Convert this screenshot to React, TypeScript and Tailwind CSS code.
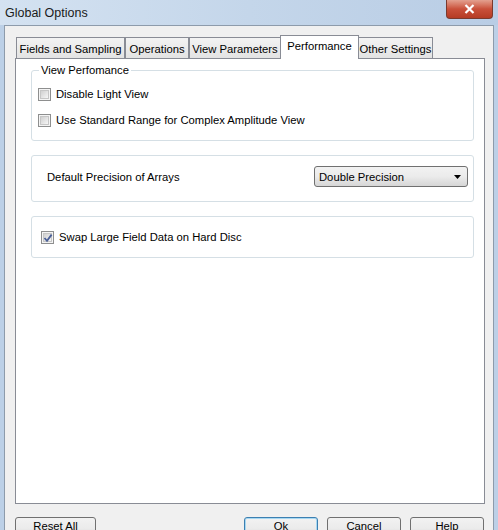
import React from "react";

const FONT = { fontFamily: '"Liberation Sans", Arial, sans-serif' };

const TABS = [
  { label: "Fields and Sampling", w: "w-[109px]" },
  { label: "Operations", w: "w-[64px]" },
  { label: "View Parameters", w: "w-[92px]" },
  { label: "Performance", w: "w-[79px]", active: true },
  { label: "Other Settings", w: "w-[75px]" },
];

function CheckBox({ checked = false }: { checked?: boolean }) {
  return (
    <span className="relative inline-flex h-[13px] w-[13px] shrink-0 items-center justify-center border border-[#8e8f8f] bg-[#f4f4f4]">
      <span className="h-[9px] w-[9px] border border-[#c6c6c6] bg-gradient-to-br from-[#d0d0d0] to-[#f6f6f6]" />
      {checked && (
        <svg className="absolute left-[1px] top-[1px]" width="10" height="10" viewBox="0 0 10 10">
          <path d="M1.5 5 L4 7.8 L8.6 1.6" fill="none" stroke="#4a5f97" strokeWidth="1.8" />
        </svg>
      )}
    </span>
  );
}

function Button({ label, primary = false, w }: { label: string; primary?: boolean; w: string }) {
  return (
    <div
      className={`flex h-[23px] ${w} items-start justify-center rounded-[3px] border bg-gradient-to-b from-[#f2f2f2] via-[#ebebeb] to-[#cfcfcf] pt-[1px] text-[11.25px] leading-[14px] text-black ${
        primary ? "border-[#3c7fb1] shadow-[inset_0_0_0_1px_#a7d8f2]" : "border-[#707070]"
      }`}
    >
      {label}
    </div>
  );
}

export default function App() {
  return (
    <div className="flex h-[530px] w-[498px] flex-col overflow-hidden bg-[#bcd0e7] text-black" style={FONT}>
      {/* Title bar */}
      <div className="flex h-[25px] shrink-0 items-start justify-between bg-gradient-to-r from-[#d4e2f1] via-[#c4d6ea] to-[#b9cde5] pl-[5px] pr-[5px]">
        <span className="mt-[4px] text-[12.5px] text-[#1a1a1a]">Global Options</span>
        <div className="flex h-[19px] w-[47px] items-center justify-center rounded-b-[4px] border border-t-0 border-[#7a3a2e] bg-gradient-to-b from-[#e3a08f] via-[#c9503a] to-[#b53b24]">
          <svg width="11" height="10" viewBox="0 0 11 10">
            <path d="M1.5 1 L9.5 9 M9.5 1 L1.5 9" stroke="#ffffff" strokeWidth="2.2" />
          </svg>
        </div>
      </div>

      {/* Client area */}
      <div className="mx-[4px] flex flex-1 flex-col border-l border-r border-t border-[#8d9bab] bg-[#f0f0f0] pl-[10px] pr-[8px] pt-[9px]">
        {/* Tabs */}
        <div className="flex h-[23px] items-end pl-[1px]">
          {TABS.map((t) =>
            t.active ? (
              <div
                key={t.label}
                className={`relative z-10 -mb-px -mx-[1px] flex h-[24px] ${t.w} justify-center whitespace-nowrap border border-b-0 border-[#898c95] bg-white pt-[3px] text-[11.25px] leading-[14px]`}
              >
                {t.label}
              </div>
            ) : (
              <div
                key={t.label}
                className={`flex h-[21px] ${t.w} justify-center whitespace-nowrap border border-b-0 border-[#898c95] bg-gradient-to-b from-[#f3f3f3] to-[#e3e3e3] pt-[4px] text-[11.25px] leading-[14px]`}
              >
                {t.label}
              </div>
            )
          )}
        </div>

        {/* Tab panel */}
        <div className="flex h-[446px] flex-col border border-[#898c95] bg-white pl-[15px] pr-[10px] pt-[4px]">
          <fieldset className="h-[78px] rounded-[3px] border border-[#d5dfe5] pl-[6px]">
            <legend className="ml-[1px] px-[2px] text-[11.25px] leading-[14px]">View Perfomance</legend>
            <label className="mt-[10px] flex h-[14px] items-center gap-[5px] text-[11.25px] leading-[14px]">
              <CheckBox />
              <span>Disable Light View</span>
            </label>
            <label className="mt-[12px] flex h-[14px] items-center gap-[5px] text-[11.25px] leading-[14px]">
              <CheckBox />
              <span>Use Standard Range for Complex Amplitude View</span>
            </label>
          </fieldset>

          <div className="mt-[14px] flex h-[47px] items-center justify-between rounded-[3px] border border-[#d5dfe5] pb-[4px] pl-[15px] pr-[5px]">
            <span className="text-[11.25px] leading-[14px]">Default Precision of Arrays</span>
            <div className="flex h-[21px] w-[154px] items-center justify-between rounded-[3px] border border-[#707070] bg-gradient-to-b from-[#f2f2f2] via-[#ebebeb] to-[#d6d6d6] pl-[4px] pr-[6px] text-[11.25px] leading-[14px]">
              <span>Double Precision</span>
              <svg width="7" height="4" viewBox="0 0 7 4">
                <path d="M0 0 L7 0 L3.5 4 Z" fill="#000" />
              </svg>
            </div>
          </div>

          <div className="mt-[14px] flex h-[42px] items-center gap-[5px] rounded-[3px] border border-[#d5dfe5] pl-[9px] text-[11.25px] leading-[14px]">
            <CheckBox checked />
            <span>Swap Large Field Data on Hard Disc</span>
          </div>
        </div>

        {/* Buttons */}
        <div className="mt-[13px] flex items-start">
          <Button label="Reset All" w="w-[81px]" />
          <div className="ml-auto flex gap-[9px] pr-[1px]">
            <Button label="Ok" primary w="w-[74px]" />
            <Button label="Cancel" w="w-[74px]" />
            <Button label="Help" w="w-[74px]" />
          </div>
        </div>
      </div>
    </div>
  );
}
